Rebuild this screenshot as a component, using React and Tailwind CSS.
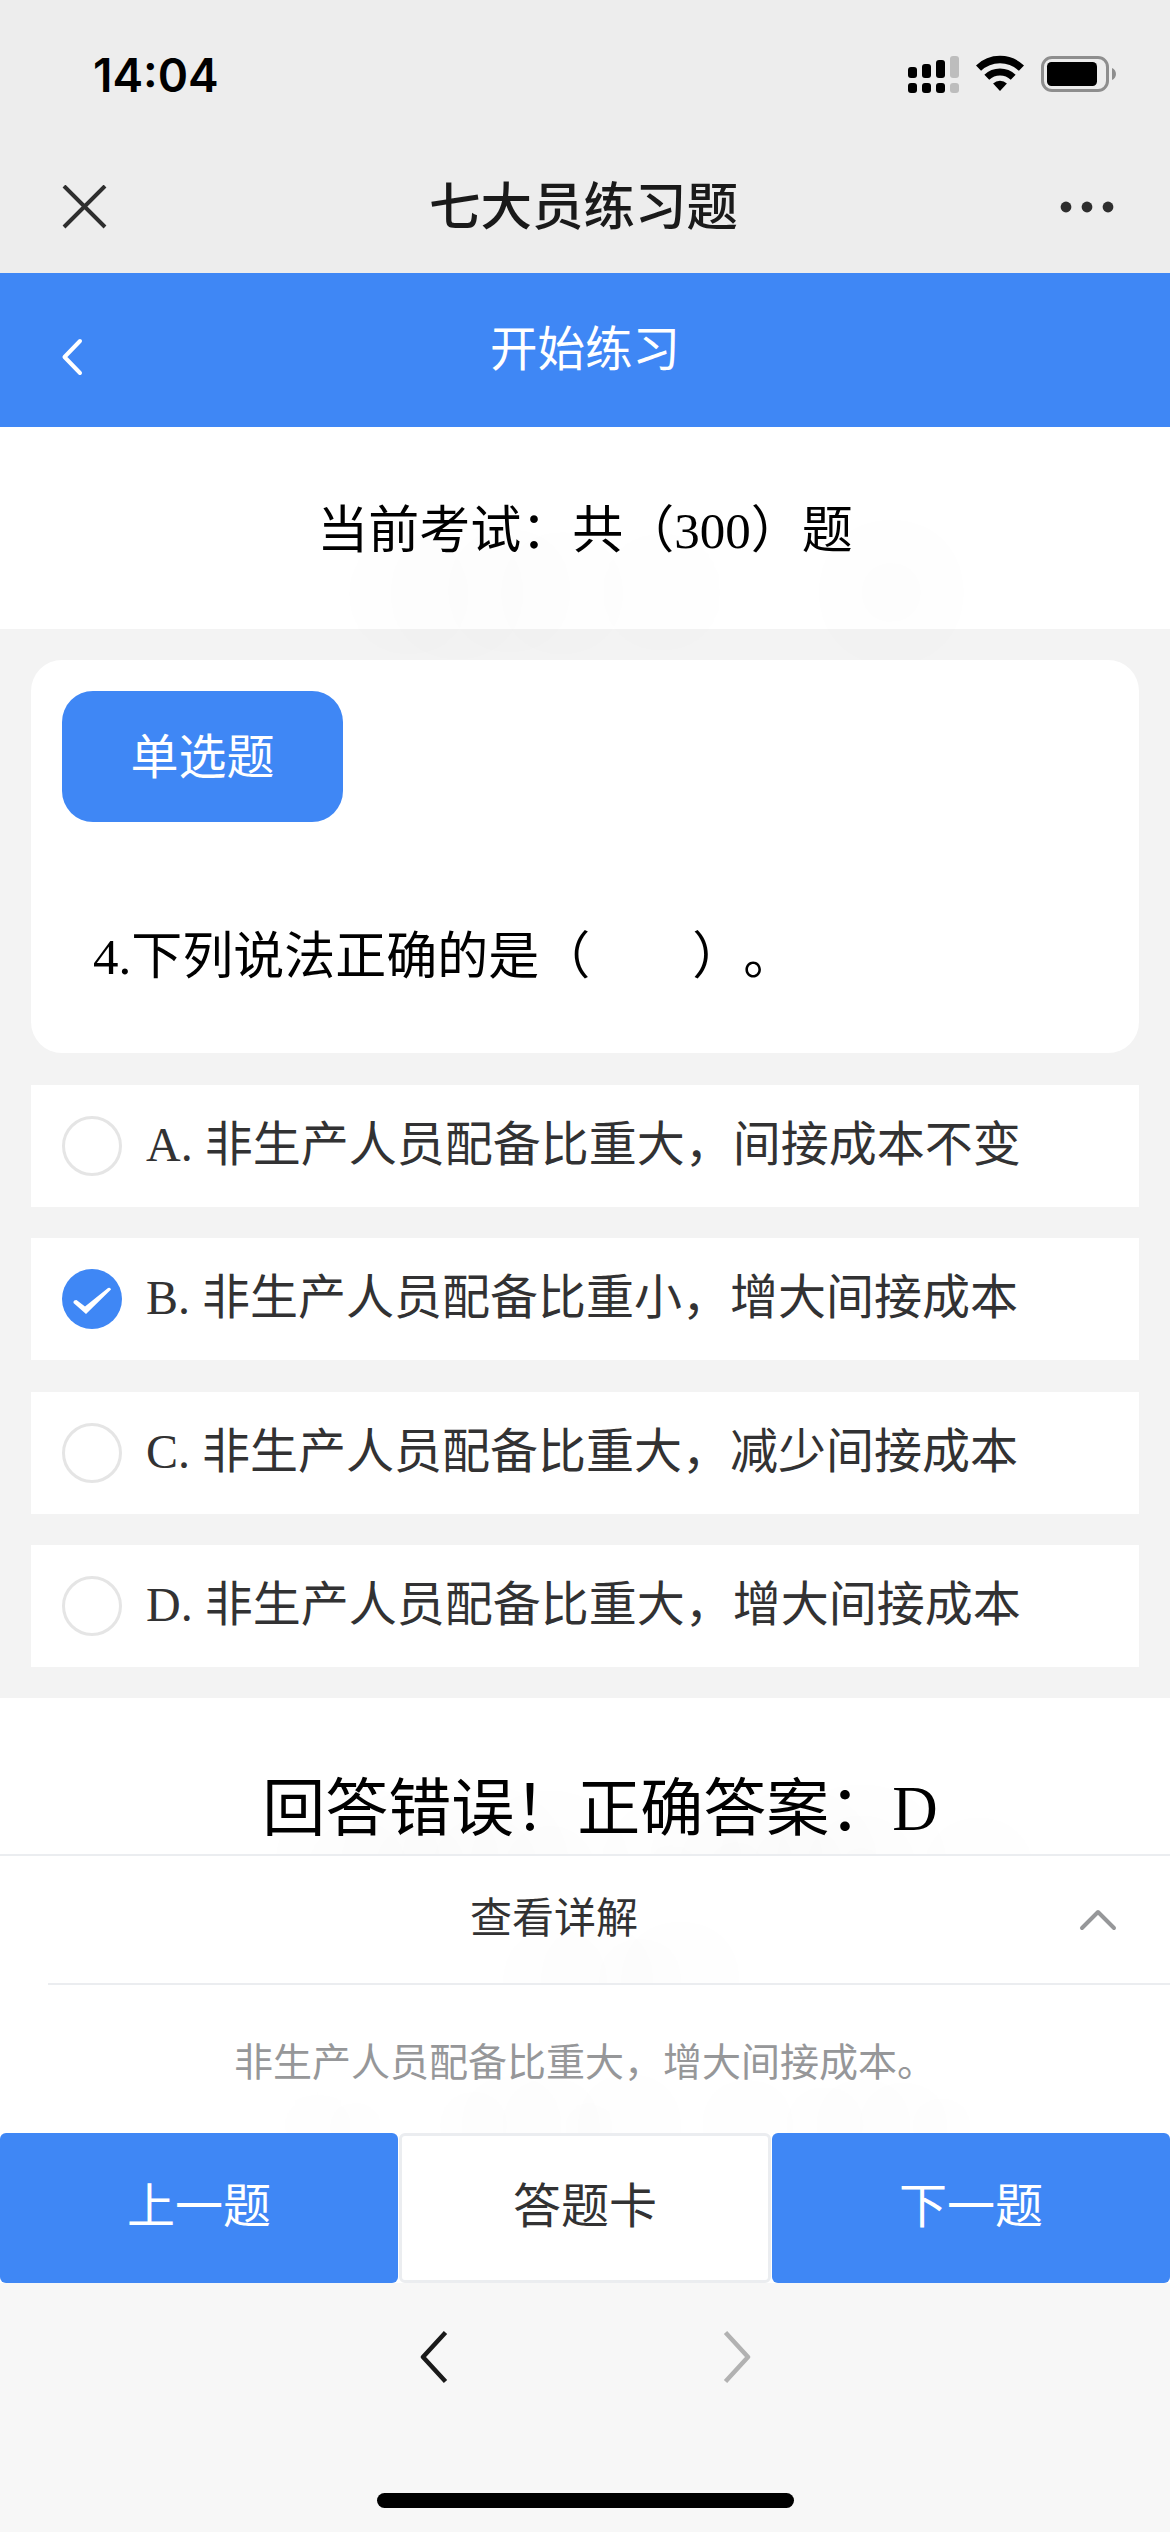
import { useState } from "react";

const options = [
  { key: "A", text: "非生产人员配备比重大，间接成本不变" },
  { key: "B", text: "非生产人员配备比重小，增大间接成本" },
  { key: "C", text: "非生产人员配备比重大，减少间接成本" },
  { key: "D", text: "非生产人员配备比重大，增大间接成本" },
];

function SignalIcon() {
  return (
    <svg width="51" height="37" viewBox="0 0 51 37">
      <rect x="0" y="11" width="9" height="11" rx="3" />
      <rect x="14" y="8" width="9" height="14" rx="3" />
      <rect x="28" y="4" width="9" height="18" rx="3" />
      <rect x="42" y="0" width="9" height="22" rx="3" fill="#bdbdbd" />
      <rect x="0" y="27" width="9" height="10" rx="3" />
      <rect x="14" y="27" width="9" height="10" rx="3" />
      <rect x="28" y="27" width="9" height="10" rx="3" />
      <rect x="42" y="27" width="9" height="10" rx="3" fill="#bdbdbd" />
    </svg>
  );
}

function WifiIcon() {
  return (
    <svg width="48" height="36" viewBox="0 0 48 36" fill="none" stroke="#000">
      <path d="M2.5 13.2a31 31 0 0 1 43 0" strokeWidth="7.4" />
      <path d="M10.8 22.3a19 19 0 0 1 26.4 0" strokeWidth="7" />
      <path d="M24 36l-6.9-7.4a10 10 0 0 1 13.8 0z" fill="#000" stroke="none" />
    </svg>
  );
}

function BatteryIcon() {
  return (
    <svg width="75" height="36" viewBox="0 0 75 36">
      <rect x="1.5" y="1.5" width="65" height="33" rx="9.5" fill="none" stroke="#8e8e8e" strokeWidth="3" />
      <rect x="6" y="6" width="50" height="24" rx="4.5" />
      <path d="M71 12c5.3 2 5.3 10 0 12z" fill="#8e8e8e" />
    </svg>
  );
}

function StatusBar() {
  return (
    <div className="flex h-[141px] items-start justify-between pl-[93px] pr-[54px] pt-[55px]">
      <span className="font-['Inter',sans-serif] text-[46px] leading-[40px] font-semibold text-black">14:04</span>
      <div className="flex items-start pt-px">
        <SignalIcon />
        <span className="-mt-px ml-[17px]">
          <WifiIcon />
        </span>
        <span className="ml-[17px]">
          <BatteryIcon />
        </span>
      </div>
    </div>
  );
}

function TitleBar() {
  return (
    <div className="flex h-[132px] items-center justify-between pl-[62px] pr-[56px]">
      <svg width="45" height="45" viewBox="0 0 45 45" fill="none" stroke="#2e2e2e" strokeWidth="4">
        <path d="M2 1l41 41M43 1L2 42" />
      </svg>
      <h1 className="pt-0.5 text-[51.5px] leading-none font-medium text-[#1a1a1a]">七大员练习题</h1>
      <svg width="54" height="12" viewBox="0 0 54 12" fill="#2e2e2e">
        <circle cx="6" cy="6" r="5.4" />
        <circle cx="27" cy="6" r="5.4" />
        <circle cx="48" cy="6" r="5.4" />
      </svg>
    </div>
  );
}

function Radio({ checked }) {
  if (!checked) {
    return <span className="size-[60px] shrink-0 rounded-full border-3 border-[#e5e5e5]" />;
  }

  return (
    <svg className="shrink-0" width="60" height="60" viewBox="0 0 60 60">
      <circle cx="30" cy="30" r="30" fill="#3f87f5" />
      <path d="M11.5 34q-.5-3 3-3l8.5 6.5L46 19q2.5-1 3 1.5L24 45z" fill="#fff" />
    </svg>
  );
}

export default function App() {
  const [selected, setSelected] = useState("B");
  const [open, setOpen] = useState(true);

  return (
    <div className="flex h-[2532px] w-[1170px] flex-col overflow-hidden bg-[#f3f3f3] font-['Liberation_Serif','Noto_Sans_CJK_SC',serif] text-black [text-spacing-trim:space-all]">
      <header className="h-[273px] shrink-0 bg-[#ededed]">
        <StatusBar />
        <TitleBar />
      </header>

      <nav className="grid h-[154px] shrink-0 grid-cols-[120px_1fr_120px] items-center bg-[#3f87f5] text-white">
        <svg className="mt-[14px] ml-[61px]" width="22" height="38" viewBox="0 0 22 38" fill="none" stroke="currentColor" strokeWidth="4" strokeLinecap="round" strokeLinejoin="round">
          <path d="M19 3L3.5 19L19 35" />
        </svg>
        <span className="pt-0.5 text-center text-[47.5px] leading-none">开始练习</span>
      </nav>

      <p className="flex h-[202px] shrink-0 items-center justify-center bg-white pt-1.5 text-[51px] leading-none [text-shadow:64px_64px_100px_rgba(0,0,0,0.15)]">
        当前考试：共（300）题
      </p>

      <main className="flex shrink-0 flex-col gap-[31px] px-[31px] py-[31px]">
        <section className="mb-px flex h-[393px] flex-col items-start rounded-[31px] bg-white p-[31px]">
          <span className="flex h-[131px] w-[281px] items-center justify-center rounded-[31px] bg-[#3f87f5] pt-0.5 text-[48px] leading-none text-white">
            单选题
          </span>
          <p className="mt-[109px] ml-[31px] text-[51px] leading-[52px] whitespace-pre">4.下列说法正确的是（　　）。</p>
        </section>

        {options.map((item) => (
          <button
            key={item.key}
            onClick={() => setSelected(item.key)}
            className="flex h-[122px] items-center bg-white px-[31px] text-left text-[48px] leading-none text-[#323233] nth-3:mb-px"
          >
            <Radio checked={selected === item.key} />
            <span className="mb-0.5 ml-6">
              {item.key}. {item.text}
            </span>
          </button>
        ))}
      </main>

      <section className="flex min-h-0 flex-1 flex-col bg-white">
        <p className="h-[156px] shrink-0 overflow-hidden pt-[79px] pl-[30px] text-center text-[63px] leading-[64px] [text-shadow:64px_64px_100px_rgba(0,0,0,0.15)]">
          回答错误！正确答案：D
        </p>

        <button
          onClick={() => setOpen(!open)}
          className="flex h-[129px] shrink-0 items-center overflow-hidden border-t-2 border-[#ebedf0] pr-[52px] pl-12 text-[42px] leading-none text-[#323233]"
        >
          <span className="mb-0.5 flex-1 pr-[18px] text-center [text-shadow:64px_64px_100px_rgba(0,0,0,0.15)]">查看详解</span>
          <svg width="40" height="24" viewBox="0 0 40 24" fill="none" stroke="#969799" strokeWidth="4" strokeLinecap="round" strokeLinejoin="round">
            <path d="M4 20L20 4L36 20" />
          </svg>
        </button>

        {open && (
          <div className="ml-12 flex-1 overflow-hidden border-t-2 border-[#ebedf0] pt-[56px] pr-12 text-center text-[39px] leading-[44px] text-[#969799] [text-shadow:64px_64px_100px_rgba(0,0,0,0.15)]">
            非生产人员配备比重大，增大间接成本。
          </div>
        )}
      </section>

      <div className="flex h-[150px] shrink-0 gap-px bg-white text-[48px] leading-none">
        <button className="w-[398px] rounded-md bg-[#3f87f5] pb-0.5 text-white">上一题</button>
        <button className="flex-1 rounded-md border-3 border-[#ebedf0] bg-white pb-0.5 text-[#323233]">答题卡</button>
        <button className="w-[398px] rounded-md bg-[#3f87f5] pb-0.5 text-white">下一题</button>
      </div>

      <footer className="flex h-[249px] shrink-0 flex-col items-center justify-between bg-[#f7f7f7] pt-[47px] pb-6">
        <div className="flex gap-[275px]">
          <svg width="28" height="54" viewBox="0 0 28 54" fill="none" stroke="#1a1a1a" strokeWidth="4.5" strokeLinejoin="round">
            <path d="M25.5 2.5L3 27L25.5 51.5" />
          </svg>
          <svg width="28" height="54" viewBox="0 0 28 54" fill="none" stroke="#b2b2b2" strokeWidth="4.5" strokeLinejoin="round">
            <path d="M2.5 2.5L25 27L2.5 51.5" />
          </svg>
        </div>
        <div className="h-[15px] w-[417px] rounded-full bg-black" />
      </footer>
    </div>
  );
}
